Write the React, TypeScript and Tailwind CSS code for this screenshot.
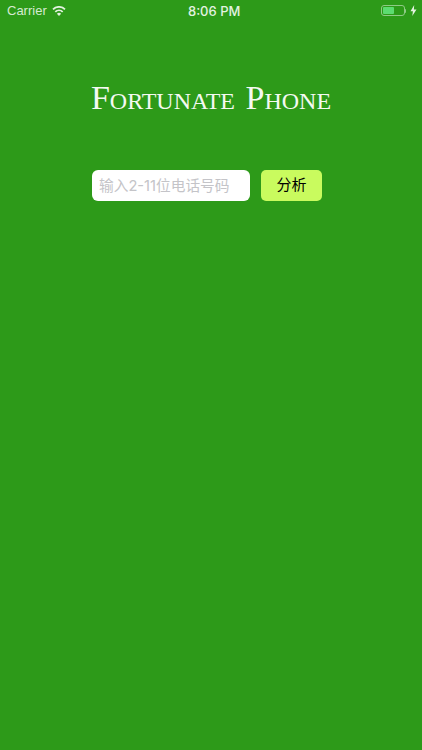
import React from "react";

export default function App() {
  return (
    <div className="w-[422px] h-[750px] overflow-hidden bg-[#2d9a19] font-['Inter','Noto_Sans_CJK_SC',sans-serif]">
      {/* status bar */}
      <div className="relative flex h-[22px] items-center justify-between pl-[7px] pr-[5px] text-[13px] text-[#d5ebd1]">
        <div className="flex items-center gap-[5px]">
          <span className="font-['Liberation_Sans',sans-serif] text-[13px]">Carrier</span>
          <svg width="14" height="10" viewBox="0 0 14 10">
            <path d="M1 3.300A8.600 8.600 0 0 1 13 3.300" fill="none" stroke="#e3f2e0" strokeWidth="1.800" />
            <path d="M3.300 5.800A5.300 5.300 0 0 1 10.700 5.800" fill="none" stroke="#e3f2e0" strokeWidth="1.800" />
            <path d="M7 10 4.900 7.800A3 3 0 0 1 9.100 7.800Z" fill="#e3f2e0" />
          </svg>
        </div>
        <span className="absolute left-[188px] top-[2px] font-['Inter',sans-serif] text-[13px] font-medium text-[#e3f2e0]">8:06 PM</span>
        <div className="mb-[1px] flex items-center gap-[4px]">
          <div className="flex items-center">
            <div className="h-[11px] w-[24px] rounded-[3px] border border-[#8fca86] p-[1px]">
              <div className="h-full w-[11px] rounded-[1px] bg-[#5cdc70]" />
            </div>
            <div className="h-[4px] w-[1px] rounded-r-sm bg-[#8fca86]" />
          </div>
          <svg width="7" height="11" viewBox="0 0 7 11">
            <path d="M4.200 0 .5 6.200h2.400L2.300 11 6.500 4.400H3.900z" fill="#e3f2e0" />
          </svg>
        </div>
      </div>

      <h1 className="mt-[54px] text-center font-['Liberation_Serif',serif] text-[34px] leading-[44px] text-[#f4f9f2] [font-variant:small-caps] [word-spacing:2px]">
        Fortunate Phone
      </h1>

      <div className="mt-[50px] flex gap-[11px] pl-[92px]">
        <input
          placeholder="输入2-11位电话号码"
          className="h-[31px] w-[158px] rounded-[6px] bg-white px-[7px] text-[14.7px] outline-none placeholder:text-[#c4c4c8]"
        />
        <button className="h-[31px] w-[61px] rounded-[5px] bg-[#c9fb5e] text-[15px] text-black">分析</button>
      </div>
    </div>
  );
}
